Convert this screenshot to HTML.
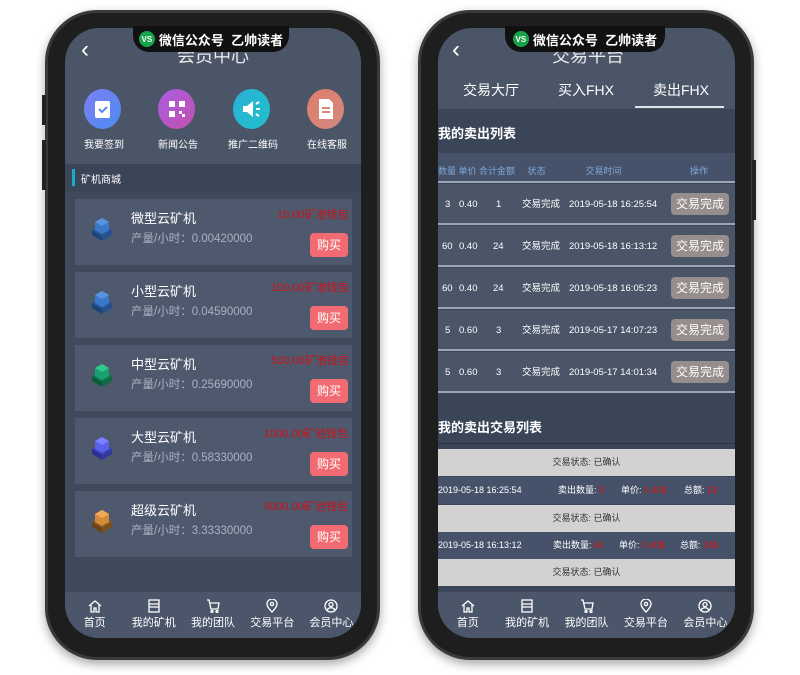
<!DOCTYPE html>
<html><head><meta charset="utf-8"><style>
*{margin:0;padding:0;box-sizing:border-box}
body{width:800px;height:675px;background:#fff;position:relative;overflow:hidden;font-family:"Liberation Sans","Noto Sans CJK SC",sans-serif}
.a{position:absolute}
.phone{position:absolute;background:#1e1e1e;border:3px solid #3a3a3a;border-radius:52px;box-shadow:0 4px 10px rgba(0,0,0,.35)}
.screen{position:absolute;border-radius:34px;overflow:hidden;background:#4b5568}
.notch{position:absolute;height:26px;background:#111;border-radius:0 0 16px 16px;color:#fff;font-size:13px;font-weight:bold;display:flex;align-items:center;justify-content:center;gap:4px}
.wx{width:16px;height:16px;border-radius:50%;background:#16a34a;color:#fff;font-size:8px;display:inline-flex;align-items:center;justify-content:center}
.t{position:absolute;white-space:nowrap}
.card{position:absolute;left:10px;width:277px;height:66px;background:#4e596d}
.nav{position:absolute;bottom:0;left:0;right:0;height:46px;background:#4b566a;display:flex}
.nav div{flex:1;text-align:center;color:#fff;font-size:11px;padding-top:7px}
.nav svg{display:block;margin:0 auto 1px}
.row{position:absolute;left:0;width:297px;height:41px;background:#4a5568;border-bottom:2px solid #9aa6b8;color:#fff;font-size:9.5px}
.row .t{line-height:12px;top:15px}
.btn{position:absolute;right:6px;top:9px;width:58px;height:22px;background:#968d8d;border-radius:4px;color:#fff;font-size:12px;text-align:center;line-height:22px}
.g{position:absolute;left:0;width:297px;height:27px;background:#d2d2d2;color:#333;font-size:9px;text-align:center;line-height:27px}
.d{position:absolute;left:0;width:297px;height:27px;background:#46526a;color:#fff;font-size:9px;line-height:27px}
.r{color:#e01010}
.buy{position:absolute;left:245px;width:38px;height:24px;background:#f26b72;border-radius:4px;color:#fff;font-size:12px;text-align:center;line-height:24px}
</style></head><body>

<!-- LEFT PHONE -->
<div class="phone" style="left:45px;top:10px;width:335px;height:650px"></div>
<div class="a" style="left:42px;top:95px;width:4px;height:30px;background:#222"></div>
<div class="a" style="left:42px;top:140px;width:4px;height:50px;background:#222"></div>
<div class="screen" style="left:65px;top:28px;width:296px;height:610px">
  <div class="t" style="left:16px;top:8px;color:#fff;font-size:24px;font-weight:200">&lsaquo;</div>
  <div class="t" style="left:112px;top:14px;color:#e8e8e8;font-size:18px">会员中心</div>
  <div class="a" style="left:19px;top:61px;width:37px;height:40px;border-radius:50%;background:linear-gradient(135deg,#7b7ef5,#4c8df0)"></div>
  <div class="a" style="left:93px;top:61px;width:37px;height:40px;border-radius:50%;background:linear-gradient(135deg,#a85ee0,#c450b0)"></div>
  <div class="a" style="left:168px;top:61px;width:37px;height:40px;border-radius:50%;background:linear-gradient(135deg,#2ab0d8,#20c0c8)"></div>
  <div class="a" style="left:242px;top:61px;width:37px;height:40px;border-radius:50%;background:linear-gradient(135deg,#e07d6a,#d08a80)"></div>
  <svg class="a" style="left:29px;top:71px" width="17" height="20"><rect x="1" y="2" width="15" height="17" rx="2" fill="#fff"/><path d="M5 10l3 3 5-5" stroke="#5c88f0" stroke-width="2" fill="none"/></svg>
  <svg class="a" style="left:103px;top:72px" width="18" height="18" fill="#fff"><rect x="1" y="1" width="6" height="6"/><rect x="11" y="1" width="6" height="6"/><rect x="1" y="11" width="6" height="6"/><rect x="11" y="11" width="3" height="3"/><rect x="14" y="14" width="3" height="3"/></svg>
  <svg class="a" style="left:176px;top:71px" width="22" height="20" fill="#fff"><path d="M2 7h4l6-5v16l-6-5H2z"/><path d="M15 5l3-2M15 10h4M15 15l3 2" stroke="#fff" stroke-width="2"/></svg>
  <svg class="a" style="left:253px;top:70px" width="16" height="22"><path d="M1 1h10l4 4v16H1z" fill="#fff"/><path d="M4 10h8M4 14h8" stroke="#d8867a" stroke-width="2"/></svg>
  <div class="t" style="left:19px;top:108px;color:#fff;font-size:10px">我要签到</div>
  <div class="t" style="left:93px;top:108px;color:#fff;font-size:10px">新闻公告</div>
  <div class="t" style="left:163px;top:108px;color:#fff;font-size:10px">推广二维码</div>
  <div class="t" style="left:242px;top:108px;color:#fff;font-size:10px">在线客服</div>
  <div class="a" style="left:0;top:136px;width:296px;height:476px;background:#3f4a5c"></div>
  <div class="a" style="left:0;top:136px;width:296px;height:28px;background:#3b4558"></div>
  <div class="a" style="left:7px;top:141px;width:3px;height:17px;background:#19aac8"></div>
  <div class="t" style="left:16px;top:143px;color:#fff;font-size:10px">矿机商城</div>

  <div class="card" style="top:171px"></div>
  <div class="card" style="top:244px"></div>
  <div class="card" style="top:317px"></div>
  <div class="card" style="top:390px"></div>
  <div class="card" style="top:463px"></div>
  <div class="t" style="left:66px;top:180px;color:#fff;font-size:13px">微型云矿机</div>
  <div class="t" style="left:66px;top:202px;color:#a8b2c4;font-size:11.5px">产量/小时：0.00420000</div>
  <div class="t" style="left:212px;top:178px;color:#d01018;font-size:11px">10.00矿池钱包</div>
  <div class="t" style="left:66px;top:253px;color:#fff;font-size:13px">小型云矿机</div>
  <div class="t" style="left:66px;top:275px;color:#a8b2c4;font-size:11.5px">产量/小时：0.04590000</div>
  <div class="t" style="left:206px;top:251px;color:#d01018;font-size:11px">100.00矿池钱包</div>
  <div class="t" style="left:66px;top:326px;color:#fff;font-size:13px">中型云矿机</div>
  <div class="t" style="left:66px;top:348px;color:#a8b2c4;font-size:11.5px">产量/小时：0.25690000</div>
  <div class="t" style="left:206px;top:324px;color:#d01018;font-size:11px">500.00矿池钱包</div>
  <div class="t" style="left:66px;top:399px;color:#fff;font-size:13px">大型云矿机</div>
  <div class="t" style="left:66px;top:421px;color:#a8b2c4;font-size:11.5px">产量/小时：0.58330000</div>
  <div class="t" style="left:199px;top:397px;color:#d01018;font-size:11px">1000.00矿池钱包</div>
  <div class="t" style="left:66px;top:472px;color:#fff;font-size:13px">超级云矿机</div>
  <div class="t" style="left:66px;top:494px;color:#a8b2c4;font-size:11.5px">产量/小时：3.33330000</div>
  <div class="t" style="left:199px;top:470px;color:#d01018;font-size:11px">5000.00矿池钱包</div>
  <div class="buy" style="top:205px">购买</div>
  <div class="buy" style="top:278px">购买</div>
  <div class="buy" style="top:351px">购买</div>
  <div class="buy" style="top:424px">购买</div>
  <div class="buy" style="top:497px">购买</div>
  <svg class="a" style="left:24px;top:186px" width="26" height="30"><path d="M3 16l10-5 10 5-10 6z" fill="#2a5a9a"/><path d="M3 16v5l10 6v-5z" fill="#1d4478"/><path d="M23 16v5l-10 6v-5z" fill="#25508c"/><path d="M6 8l7-4 7 4v8l-7 4-7-4z" fill="#3c78c8"/><path d="M6 8l7-4 7 4-7 4z" fill="#5a94e0"/></svg>
  <svg class="a" style="left:24px;top:259px" width="26" height="30"><path d="M3 16l10-5 10 5-10 6z" fill="#2a5a9a"/><path d="M3 16v5l10 6v-5z" fill="#1d4478"/><path d="M23 16v5l-10 6v-5z" fill="#25508c"/><path d="M6 8l7-4 7 4v8l-7 4-7-4z" fill="#3c78c8"/><path d="M6 8l7-4 7 4-7 4z" fill="#5a94e0"/></svg>
  <svg class="a" style="left:24px;top:332px" width="26" height="30"><path d="M3 16l10-5 10 5-10 6z" fill="#0f7a50"/><path d="M3 16v5l10 6v-5z" fill="#0a5a3a"/><path d="M23 16v5l-10 6v-5z" fill="#0d6a45"/><path d="M6 8l7-4 7 4v8l-7 4-7-4z" fill="#18a070"/><path d="M6 8l7-4 7 4-7 4z" fill="#30c890"/></svg>
  <svg class="a" style="left:24px;top:405px" width="26" height="30"><path d="M3 16l10-5 10 5-10 6z" fill="#3a40b8"/><path d="M3 16v5l10 6v-5z" fill="#2a2f90"/><path d="M23 16v5l-10 6v-5z" fill="#3238a0"/><path d="M6 8l7-4 7 4v8l-7 4-7-4z" fill="#5a60e8"/><path d="M6 8l7-4 7 4-7 4z" fill="#7a80ff"/></svg>
  <svg class="a" style="left:24px;top:478px" width="26" height="30"><path d="M3 16l10-5 10 5-10 6z" fill="#8a5a20"/><path d="M3 16v5l10 6v-5z" fill="#6a4418"/><path d="M23 16v5l-10 6v-5z" fill="#7a4e1c"/><path d="M6 8l7-4 7 4v8l-7 4-7-4z" fill="#d08a38"/><path d="M6 8l7-4 7 4-7 4z" fill="#f0aa58"/></svg>

  <div class="nav">
    <div><svg width="14" height="14" fill="none" stroke="#fff" stroke-width="1.3"><path d="M1 7l6-5 6 5M3 6v7h3V9h2v4h3V6"/></svg>首页</div>
    <div><svg width="14" height="14" fill="none" stroke="#fff" stroke-width="1.3"><rect x="2" y="1" width="10" height="12"/><path d="M2 5h10M2 8h10"/></svg>我的矿机</div>
    <div><svg width="14" height="14" fill="none" stroke="#fff" stroke-width="1.3"><path d="M1 1h2l2 9h7l1-6H4"/><circle cx="6" cy="12.5" r="1"/><circle cx="11" cy="12.5" r="1"/></svg>我的团队</div>
    <div><svg width="14" height="14" fill="none" stroke="#fff" stroke-width="1.3"><path d="M7 13s-5-5-5-8a5 5 0 0110 0c0 3-5 8-5 8z"/><circle cx="7" cy="5" r="1.6"/></svg>交易平台</div>
    <div><svg width="14" height="14" fill="none" stroke="#fff" stroke-width="1.3"><circle cx="7" cy="7" r="6"/><circle cx="7" cy="5.5" r="2"/><path d="M3 11c2-3 6-3 8 0"/></svg>会员中心</div>
  </div>
</div>
<div class="notch" style="left:133px;top:26px;width:156px"><span class="wx">VS</span>微信公众号&nbsp;&nbsp;乙帅读者</div>

<!-- RIGHT PHONE -->
<div class="phone" style="left:418px;top:10px;width:336px;height:650px"></div>
<div class="a" style="left:752px;top:160px;width:4px;height:60px;background:#222"></div>
<div class="screen" style="left:438px;top:28px;width:297px;height:610px">
  <div class="t" style="left:14px;top:8px;color:#fff;font-size:24px">&lsaquo;</div>
  <div class="t" style="left:114px;top:14px;color:#e8e8e8;font-size:18px">交易平台</div>
  <div class="t" style="left:25px;top:52px;color:#fff;font-size:14px">交易大厅</div>
  <div class="t" style="left:120px;top:52px;color:#fff;font-size:14px">买入FHX</div>
  <div class="t" style="left:215px;top:52px;color:#fff;font-size:14px">卖出FHX</div>
  <div class="a" style="left:197px;top:78px;width:89px;height:2px;background:#dfe4ea"></div>
  <div class="a" style="left:0;top:81px;width:297px;height:529px;background:#3a4558"></div>
  <div class="t" style="left:0;top:95px;color:#fff;font-size:13px;font-weight:bold">我的卖出列表</div>
  <div class="a" style="left:0;top:125px;width:297px;height:30px;background:#46526a;border-bottom:2px solid #9aa6b8"></div>
  <div class="t" style="left:0;top:136px;color:#7fa8d8;font-size:9px">数量 单价 合计金额&nbsp;&nbsp;&nbsp;&nbsp;&nbsp;状态&nbsp;&nbsp;&nbsp;&nbsp;&nbsp;&nbsp;&nbsp;&nbsp;&nbsp;&nbsp;&nbsp;&nbsp;&nbsp;&nbsp;&nbsp;&nbsp;交易时间</div>
  <div class="t" style="left:252px;top:136px;color:#7fa8d8;font-size:9px">操作</div>

  <div class="row" style="top:156px"><span class="t" style="left:7px">3</span><span class="t" style="left:21px">0.40</span><span class="t" style="left:58px">1</span><span class="t" style="left:84px">交易完成</span><span class="t" style="left:131px">2019-05-18 16:25:54</span><div class="btn">交易完成</div></div>
  <div class="row" style="top:198px"><span class="t" style="left:4px">60</span><span class="t" style="left:21px">0.40</span><span class="t" style="left:55px">24</span><span class="t" style="left:84px">交易完成</span><span class="t" style="left:131px">2019-05-18 16:13:12</span><div class="btn">交易完成</div></div>
  <div class="row" style="top:240px"><span class="t" style="left:4px">60</span><span class="t" style="left:21px">0.40</span><span class="t" style="left:55px">24</span><span class="t" style="left:84px">交易完成</span><span class="t" style="left:131px">2019-05-18 16:05:23</span><div class="btn">交易完成</div></div>
  <div class="row" style="top:282px"><span class="t" style="left:7px">5</span><span class="t" style="left:21px">0.60</span><span class="t" style="left:58px">3</span><span class="t" style="left:84px">交易完成</span><span class="t" style="left:131px">2019-05-17 14:07:23</span><div class="btn">交易完成</div></div>
  <div class="row" style="top:324px"><span class="t" style="left:7px">5</span><span class="t" style="left:21px">0.60</span><span class="t" style="left:58px">3</span><span class="t" style="left:84px">交易完成</span><span class="t" style="left:131px">2019-05-17 14:01:34</span><div class="btn">交易完成</div></div>

  <div class="t" style="left:0;top:389px;color:#fff;font-size:13px;font-weight:bold">我的卖出交易列表</div>
  <div class="a" style="left:0;top:415px;width:297px;height:1px;background:#2c3444"></div>
  <div class="g" style="top:421px">交易状态: 已确认</div>
  <div class="d" style="top:449px"><span class="t" style="left:0">2019-05-18 16:25:54</span><span class="t" style="left:120px">卖出数量: <span class="r">3</span></span><span class="t" style="left:183px">单价: <span class="r">0.40$</span></span><span class="t" style="left:246px">总额: <span class="r">1$</span></span></div>
  <div class="g" style="top:477px">交易状态: 已确认</div>
  <div class="d" style="top:504px"><span class="t" style="left:0">2019-05-18 16:13:12</span><span class="t" style="left:115px">卖出数量: <span class="r">60</span></span><span class="t" style="left:181px">单价: <span class="r">0.40$</span></span><span class="t" style="left:242px">总额: <span class="r">24$</span></span></div>
  <div class="g" style="top:531px">交易状态: 已确认</div>

  <div class="nav">
    <div><svg width="14" height="14" fill="none" stroke="#fff" stroke-width="1.3"><path d="M1 7l6-5 6 5M3 6v7h3V9h2v4h3V6"/></svg>首页</div>
    <div><svg width="14" height="14" fill="none" stroke="#fff" stroke-width="1.3"><rect x="2" y="1" width="10" height="12"/><path d="M2 5h10M2 8h10"/></svg>我的矿机</div>
    <div><svg width="14" height="14" fill="none" stroke="#fff" stroke-width="1.3"><path d="M1 1h2l2 9h7l1-6H4"/><circle cx="6" cy="12.5" r="1"/><circle cx="11" cy="12.5" r="1"/></svg>我的团队</div>
    <div><svg width="14" height="14" fill="none" stroke="#fff" stroke-width="1.3"><path d="M7 13s-5-5-5-8a5 5 0 0110 0c0 3-5 8-5 8z"/><circle cx="7" cy="5" r="1.6"/></svg>交易平台</div>
    <div><svg width="14" height="14" fill="none" stroke="#fff" stroke-width="1.3"><circle cx="7" cy="7" r="6"/><circle cx="7" cy="5.5" r="2"/><path d="M3 11c2-3 6-3 8 0"/></svg>会员中心</div>
  </div>
</div>
<div class="notch" style="left:505px;top:26px;width:160px"><span class="wx">VS</span>微信公众号&nbsp;&nbsp;乙帅读者</div>
</body></html>
